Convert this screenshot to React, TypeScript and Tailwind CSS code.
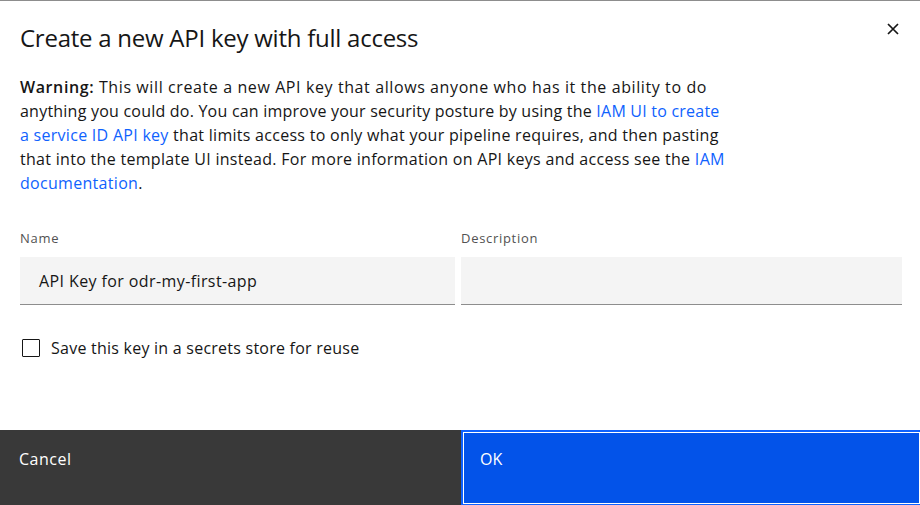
import React from "react";

const CloseIcon = () => (
  <svg width="20" height="20" viewBox="0 0 20 20" fill="none" stroke="#161616" strokeWidth="1.7" aria-hidden="true">
    <path d="M5 5L15 15M15 5L5 15" />
  </svg>
);

const Link = ({ children }: { children: React.ReactNode }) => (
  <a href="#" className="text-[#0f62fe] no-underline">
    {children}
  </a>
);

export default function App() {
  return (
    <div className="w-[920px] h-[505px] overflow-hidden bg-white border-t border-[#8d8d8d] flex flex-col text-[#161616] font-['Open_Sans',sans-serif]">
      {/* Header */}
      <div className="flex items-start justify-between pl-5 pr-[17px] pt-[23px]">
        <h2 className="text-[24px] leading-[28px] tracking-[-0.25px] font-normal">Create a new API key with full access</h2>
        <button type="button" className="mt-[-5px] p-0">
          <CloseIcon />
        </button>
      </div>

      {/* Body */}
      <div className="pl-5 pt-[23px]">
        <p className="text-[16px] leading-[24px] whitespace-nowrap">
          <span className="tracking-[0.6px]">
            <span className="font-semibold">Warning:</span> This will create a new API key that allows anyone who has it the ability to do
          </span>
          <br />
          <span className="tracking-[0.22px]">
            anything you could do. You can improve your security posture by using the <Link>IAM UI to create</Link>
          </span>
          <br />
          <span className="tracking-[0.28px]">
            <Link>a service ID API key</Link> that limits access to only what your pipeline requires, and then pasting
          </span>
          <br />
          <span className="tracking-[0.3px]">
            that into the template UI instead. For more information on API keys and access see the <Link>IAM</Link>
          </span>
          <br />
          <span className="tracking-[0.3px]">
            <Link>documentation</Link>.
          </span>
        </p>

        <div className="flex gap-[6px] mt-[35px]">
          <div className="w-[435px] flex flex-col">
            <label className="text-[13px] leading-[16px] tracking-[0.7px] text-[#525252]">Name</label>
            <div className="mt-[11px] h-[48px] bg-[#f4f4f4] border-b border-[#8d8d8d] flex items-center pl-[19px] text-[16px] tracking-[0.4px]">
              API Key for odr-my-first-app
            </div>
          </div>
          <div className="w-[441px] flex flex-col">
            <label className="text-[13px] leading-[16px] tracking-[0.7px] text-[#525252]">Description</label>
            <div className="mt-[11px] h-[48px] bg-[#f4f4f4] border-b border-[#8d8d8d]" />
          </div>
        </div>

        <label className="flex items-center mt-[31px] ml-[2px] h-[24px]">
          <span className="w-[18px] h-[18px] border border-[#161616] rounded-[1px] bg-white" />
          <span className="ml-[11px] text-[16px] leading-[24px] tracking-[0.24px]">Save this key in a secrets store for reuse</span>
        </label>
      </div>

      {/* Footer */}
      <div className="mt-auto h-[75px] flex">
        <button type="button" className="w-[461px] h-full bg-[#393939] text-white text-left pl-[19px] pt-[17px] flex items-start text-[16px] leading-[24px] tracking-[0.5px]">
          Cancel
        </button>
        <button
          type="button"
          className="flex-1 h-full bg-[#0353e9] text-white text-left pl-[17px] pt-[15px] flex items-start text-[16px] leading-[24px] border-t-2 border-l-2 border-b border-r-0 border-[#0f62fe] shadow-[inset_0_0_0_1px_#ffffff]"
        >
          OK
        </button>
      </div>
    </div>
  );
}
